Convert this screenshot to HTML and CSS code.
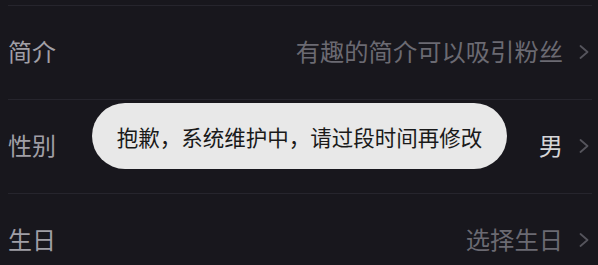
FILE: index.html
```html
<!DOCTYPE html>
<html lang="zh-CN">
<head>
<meta charset="utf-8">
<title>编辑资料</title>
<link rel="stylesheet" href="styles.css">
</head>
<body>
<div class="list">
  <div class="row">
    <span class="label">简介</span>
    <span class="value">有趣的简介可以吸引粉丝</span>
    <svg class="chev" viewBox="0 0 10 14" width="10" height="14"><polyline points="1.5,1 8.5,7 1.5,13" fill="none" stroke="currentColor" stroke-width="1.8" stroke-linecap="round" stroke-linejoin="round"/></svg>
  </div>
  <div class="row">
    <span class="label">性别</span>
    <span class="value value-set">男</span>
    <svg class="chev" viewBox="0 0 10 14" width="10" height="14"><polyline points="1.5,1 8.5,7 1.5,13" fill="none" stroke="currentColor" stroke-width="1.8" stroke-linecap="round" stroke-linejoin="round"/></svg>
  </div>
  <div class="row">
    <span class="label">生日</span>
    <span class="value">选择生日</span>
    <svg class="chev" viewBox="0 0 10 14" width="10" height="14"><polyline points="1.5,1 8.5,7 1.5,13" fill="none" stroke="currentColor" stroke-width="1.8" stroke-linecap="round" stroke-linejoin="round"/></svg>
  </div>
</div>
<div class="toast">抱歉，系统维护中，请过段时间再修改</div>
</body>
</html>
```
FILE: styles.css
```css
html, body {
  margin: 0;
  padding: 0;
  background: #18171d;
  width: 598px;
  height: 265px;
  overflow: hidden;
  font-family: "Noto Sans CJK SC", "Noto Sans", sans-serif;
}
.list {
  margin: 5px 6px 0 8px;
  border-top: 1px solid #26252d;
}
.row {
  height: 90px;
  padding-bottom: 3px;
  display: flex;
  align-items: center;
  border-bottom: 1px solid #26252d;
  padding-right: 3px;
}
.label {
  font-size: 24px;
  color: #a09fa6;
  flex: 1;
  line-height: 1;
}
.value {
  font-size: 24.3px;
  color: #6b6a72;
  line-height: 1;
}
.value-set {
  color: #d6d6d8;
}
.chev {
  margin-left: 16px;
  margin-top: 2px;
  color: #55545c;
}
.toast {
  position: absolute;
  top: 103px;
  left: 92px;
  width: 415px;
  height: 66px;
  box-sizing: border-box;
  border-radius: 33px;
  background: #e8e8e8;
  color: #1a1a1a;
  font-size: 21.5px;
  display: flex;
  align-items: center;
  justify-content: center;
  white-space: nowrap;
}
```
